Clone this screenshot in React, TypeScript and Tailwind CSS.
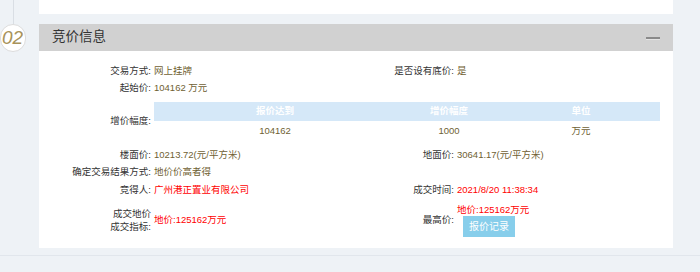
import { ReactNode } from "react";

const font = { fontFamily: '"Liberation Sans", "Noto Sans CJK SC", sans-serif' };

function Label({ children }: { children: ReactNode }) {
  return <div className="flex items-center justify-end pr-[3px] text-[#333]">{children}</div>;
}

function Value({ children, red, span }: { children: ReactNode; red?: boolean; span?: boolean }) {
  return (
    <div
      className={`flex items-center ${red ? "text-[#ff0000]" : "text-[#6f5f33]"} ${span ? "col-span-3" : ""}`}
    >
      {children}
    </div>
  );
}

export default function App() {
  return (
    <div className="flex h-[272px] w-[700px] flex-col overflow-hidden bg-[#eef2f6] text-[9.5px]" style={font}>
      <div className="flex h-[255px] shrink-0">
        {/* timeline */}
        <div className="flex w-[39px] shrink-0 flex-col items-start">
          <div className="flex w-[26px] justify-center">
            <div className="h-[24px] w-px bg-[#d9dee4]" />
          </div>
          <div className="flex h-[28px] w-[26px] items-center justify-center rounded-full border border-[#dcdcdc] bg-white">
            <span className="pr-[1px] text-[19px] italic text-[#a8935a]">02</span>
          </div>
        </div>

        <div className="flex w-[634px] flex-col">
          <div className="h-[14px] bg-white" />
          <div className="mt-[10px] flex h-[27px] items-center justify-between bg-[#d1d1d1] pl-[13px] pr-[13px]">
            <span className="text-[13.5px] text-[#333]">竞价信息</span>
            <span className="h-[2px] w-[14px] bg-[#8a8a8a] shadow-[0_1px_0_#e4e4e4]" />
          </div>

          <div className="grid grid-cols-[115px_199px_104px_1fr] bg-white pb-[7px] pr-[13px] pt-[12px]">
            <div className="contents [&>div]:h-[17px]">
              <Label>交易方式:</Label>
              <Value>网上挂牌</Value>
              <Label>是否设有底价:</Label>
              <Value>是</Value>
            </div>

            <div className="contents [&>div]:h-[17px]">
              <Label>起始价:</Label>
              <Value span>104162 万元</Value>
            </div>

            <Label>增价幅度:</Label>
            <div className="col-span-3 py-[5px]">
              <div className="grid grid-cols-[242px_106px_1fr] text-center">
                <div className="contents font-bold text-white [&>div]:flex [&>div]:h-[19px] [&>div]:items-center [&>div]:justify-center [&>div]:bg-[#d5e8f8]">
                  <div>报价达到</div>
                  <div>增价幅度</div>
                  <div>单位</div>
                </div>
                <div className="contents text-[#6f5f33] [&>div]:flex [&>div]:h-[20px] [&>div]:items-center [&>div]:justify-center">
                  <div>104162</div>
                  <div>1000</div>
                  <div>万元</div>
                </div>
              </div>
            </div>

            <div className="contents [&>div]:h-[18px]">
              <Label>楼面价:</Label>
              <Value>10213.72(元/平方米)</Value>
              <Label>地面价:</Label>
              <Value>30641.17(元/平方米)</Value>
            </div>

            <div className="contents [&>div]:h-[17px]">
              <Label>确定交易结果方式:</Label>
              <Value span>地价价高者得</Value>
            </div>

            <div className="contents [&>div]:h-[18px]">
              <Label>竞得人:</Label>
              <Value red>广州港正置业有限公司</Value>
              <Label>成交时间:</Label>
              <Value red>2021/8/20 11:38:34</Value>
            </div>

            <div className="contents [&>div]:h-[42px]">
              <div className="flex flex-col items-end justify-center pr-[3px] leading-[13px] text-[#333]">
                <span>成交地价</span>
                <span>成交指标:</span>
              </div>
              <Value red>地价:125162万元</Value>
              <Label>最高价:</Label>
              <div className="flex flex-col items-start justify-center">
                <span className="leading-[13px] text-[#ff0000]">地价:125162万元</span>
                <button className="ml-[6px] flex h-[21px] w-[52px] items-center justify-center bg-[#87ceeb] text-[10px] text-white">
                  报价记录
                </button>
              </div>
            </div>
          </div>
        </div>
      </div>
      <div className="border-t border-[#e1e6ec]" />
    </div>
  );
}
